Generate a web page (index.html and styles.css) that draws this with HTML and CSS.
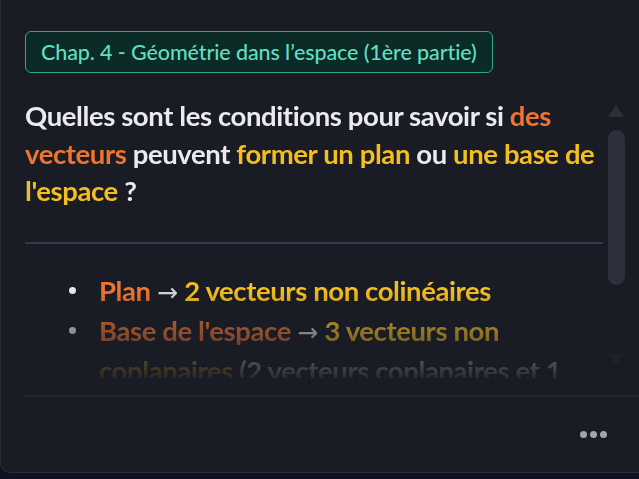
FILE: index.html
```html
<!DOCTYPE html>
<html lang="fr">
<head>
<meta charset="utf-8">
<title>Flashcard</title>
<link rel="stylesheet" href="styles.css">
</head>
<body>
<div class="card">
  <div class="badge">Chap. 4 - Géométrie dans l’espace (1ère partie)</div>
  <div class="scroll-area">
    <div class="content">
      <p class="question">Quelles sont les conditions pour savoir si <span class="or">des vecteurs</span> peuvent <span class="ye">former un plan</span> ou <span class="ye">une base de l'espace</span> ?</p>
      <hr class="rule">
      <ul class="list">
        <li><span class="or">Plan</span> <span class="arrow">→</span> <span class="ye">2 vecteurs non colinéaires</span></li>
        <li><span class="or">Base de l'espace</span> <span class="arrow">→</span> <span class="ye">3 vecteurs non coplanaires</span> (2 vecteurs coplanaires et 1 vecteur non coplanaire)</li>
      </ul>
    </div>
    <div class="scrollbar">
      <div class="arrow-up"></div>
      <div class="thumb"></div>
      <div class="track"></div>
      <div class="arrow-down"></div>
    </div>
  </div>
  <hr class="footer-rule">
  <div class="footer">
    <div class="dots"><span></span><span></span><span></span></div>
  </div>
</div>
</body>
</html>
```
FILE: styles.css
```css
html, body {
  margin: 0;
  padding: 0;
  background: #0e1120;
  overflow: hidden;
}
.card {
  box-sizing: border-box;
  width: 100%;
  height: 473px;
  background: #191c25;
  border-left: 1px solid #262a35;
  border-bottom: 1px solid #2a2e3a;
  border-bottom-left-radius: 10px;
  padding: 31px 0 0 24px;
  font-family: Lato, "Noto Sans", sans-serif;
  display: flex;
  flex-direction: column;
}
.badge {
  align-self: flex-start;
  box-sizing: border-box;
  height: 42px;
  padding: 0 15px;
  display: flex;
  align-items: center;
  border: 1.5px solid #2ba98e;
  border-radius: 6px;
  background: #0c2a26;
  color: #5fdfc1;
  font-size: 21.5px;
  font-weight: 500;
  letter-spacing: -0.1px;
}
.scroll-area {
  margin-top: 22px;
  height: 283px;
  display: flex;
  gap: 5px;
  -webkit-mask-image: linear-gradient(to bottom, #000 0, #000 195px, transparent 290px);
  mask-image: linear-gradient(to bottom, #000 0, #000 195px, transparent 290px);
}
.content {
  flex: 1;
  overflow: hidden;
  color: #ebebef;
  font-size: 27.5px;
  font-weight: 700;
  line-height: 37.5px;
  letter-spacing: -0.4px;
}
.question {
  margin: 0;
  padding-top: 2px;
}
.or { color: #ee7430; }
.ye { color: #f4be1f; }
.arrow {
  color: #d8d9de;
  font-weight: 400;
  font-family: "DejaVu Sans", sans-serif;
  font-size: 25px;
  letter-spacing: 0;
}
.rule {
  margin: 32px 0 0 0;
  border: 0;
  height: 2px;
  background: #363945;
}
.list {
  list-style: none;
  margin: 28px 0 0 0;
  padding: 0;
}
.list li {
  position: relative;
  padding-left: 74px;
  line-height: 38px;
}
.list li::before {
  content: "";
  position: absolute;
  left: 44px;
  top: 15px;
  width: 7px;
  height: 7px;
  border-radius: 50%;
  background: #e8e8ec;
}
.scrollbar {
  width: 17px;
  margin-right: 14px;
  display: flex;
  flex-direction: column;
  padding-top: 10px;
}
.arrow-up, .arrow-down {
  width: 0;
  height: 0;
  border-left: 8.5px solid transparent;
  border-right: 8.5px solid transparent;
}
.arrow-up {
  border-bottom: 12px solid #2d303b;
}
.arrow-down {
  border-top: 11px solid #2d303b;
  margin-bottom: 13px;
}
.thumb {
  margin-top: 13px;
  height: 155px;
  border-radius: 8.5px;
  background: #2d303b;
}
.track { flex: 1; }
.footer-rule {
  margin: 17px 0 0 0;
  border: 0;
  height: 2px;
  background: #232732;
}
.footer {
  display: flex;
  justify-content: flex-end;
  padding: 34px 32px 0 0;
}
.dots {
  display: flex;
  gap: 3px;
}
.dots span {
  width: 7px;
  height: 7px;
  border-radius: 50%;
  background: #a2a4ad;
}
```
